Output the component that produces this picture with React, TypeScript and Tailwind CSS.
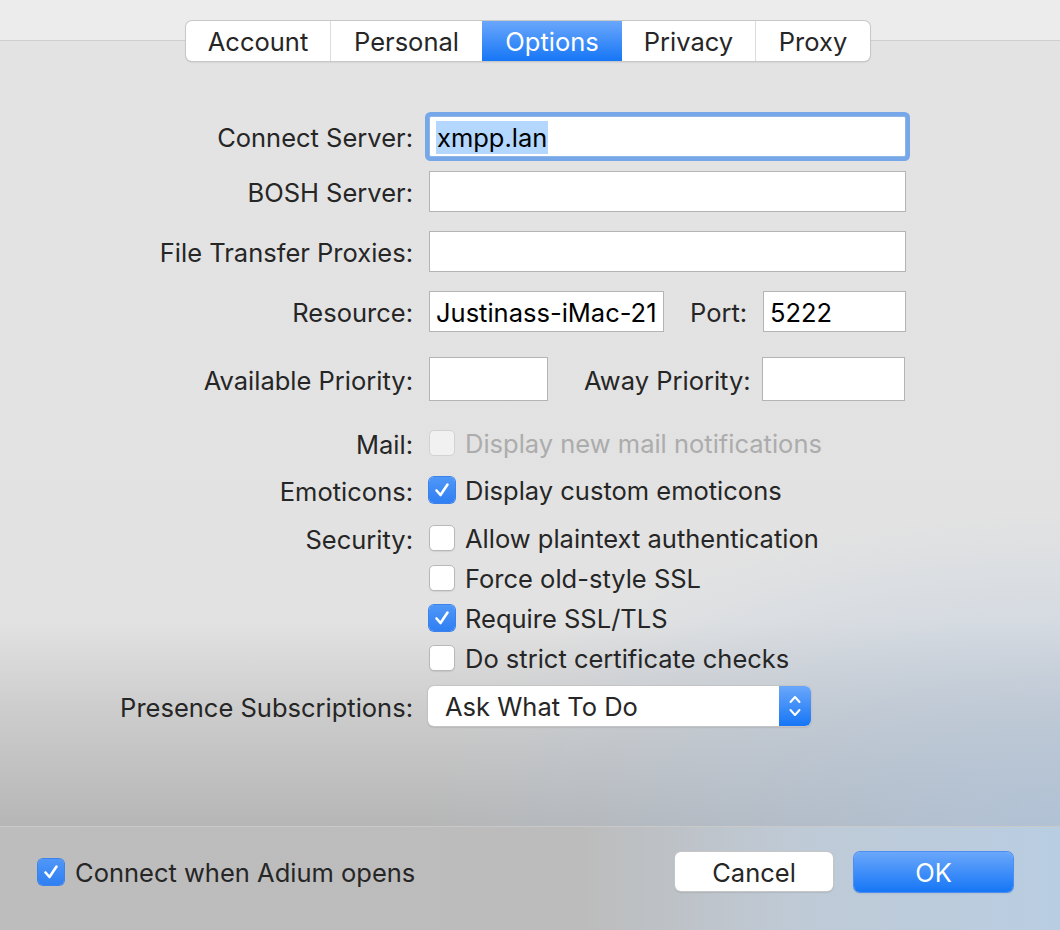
import type { ReactNode } from 'react';

const font = 'font-["Inter","Noto_Sans",sans-serif]';

function Check({ checked, disabled }: { checked?: boolean; disabled?: boolean }) {
  if (checked) {
    return (
      <span className="flex h-[26px] w-[26px] shrink-0 items-center justify-center rounded-[5px] bg-[linear-gradient(180deg,#4f97f8,#2f7ff3)] shadow-[0_0_0_1px_#3a82ec]">
        <svg width="18" height="18" viewBox="0 0 18 18">
          <path d="M3.5 9.5 L7.5 14 L14.5 3.5" fill="none" stroke="#fff" strokeWidth="2.6" strokeLinecap="round" strokeLinejoin="round" />
        </svg>
      </span>
    );
  }
  return (
    <span
      className={`block h-[26px] w-[26px] shrink-0 rounded-[5px] border ${
        disabled ? 'border-[#d2d2d2] bg-[#f1f1f1]' : 'border-[#b8b8b8] bg-white shadow-[0_1px_1px_rgba(0,0,0,0.08)]'
      }`}
    />
  );
}

function Row({ label, children, className = '' }: { label?: string; children: ReactNode; className?: string }) {
  return (
    <div className={`flex items-center ${className}`}>
      <div className="w-[413px] shrink-0 pt-[3px] text-right text-[#262626]">{label}</div>
      <div className="ml-[16px] flex items-center">{children}</div>
    </div>
  );
}

function CheckRow({ label, text, checked, disabled }: { label?: string; text: string; checked?: boolean; disabled?: boolean }) {
  return (
    <Row label={label} className="h-[40px]">
      <Check checked={checked} disabled={disabled} />
      <span className={`ml-[10px] pt-[2px] ${disabled ? 'text-[#acacac]' : 'text-[#262626]'}`}>{text}</span>
    </Row>
  );
}

function Field({ value = '', width, height = 41, focused }: { value?: string; width: number; height?: number; focused?: boolean }) {
  return (
    <div
      className={`flex items-center overflow-hidden border bg-white pl-[6px] pt-[2px] text-black ${
        focused ? 'rounded-[2px] border-[#8fb4e6] shadow-[0_0_0_4px_#76a7e8]' : 'border-[#b4b4b4]'
      }`}
      style={{ width, height }}
    >
      {focused ? <span className="bg-[#b3d7ff] px-[1px] leading-[33px]">{value}</span> : <span className="whitespace-nowrap">{value}</span>}
    </div>
  );
}

const tabs = ['Account', 'Personal', 'Options', 'Privacy', 'Proxy'];
const tabWidths = [144, 152, 140, 133, 115];

export default function App() {
  return (
    <div className={`h-[930px] w-[1060px] overflow-hidden bg-[#e3e3e3] text-[25.5px] leading-[36px] ${font}`}>
      {/* top strip */}
      <div className="h-[41px] border-b border-[#cfcfcf] bg-[#ececec]" />

      {/* body */}
      <div className="flow-root h-[785px] bg-[radial-gradient(ellipse_60%_40%_at_100%_100%,rgba(176,198,224,0.75),rgba(176,198,224,0)),linear-gradient(180deg,#e3e3e3_0%,#e2e2e2_74%,#cdcdcd_85%,#b6b6b6_100%)]">
        {/* tabs */}
        <div className="-mt-[20px] flex justify-center">
          <div className="-ml-[4px] flex h-[40px] overflow-hidden rounded-[6px] bg-white shadow-[0_0_0_1px_#c8c8c8,0_1px_2px_rgba(0,0,0,0.2)]">
            {tabs.map((t, i) => (
              <div
                key={t}
                className={`flex items-center justify-center pt-[2px] ${
                  t === 'Options'
                    ? 'bg-[linear-gradient(180deg,#6aa7fb,#1676f6)] text-white'
                    : 'text-[#262626]'
                } ${i > 0 && t !== 'Options' && tabs[i - 1] !== 'Options' ? 'border-l border-[#dcdcdc]' : ''}`}
                style={{ width: tabWidths[i] }}
              >
                {t}
              </div>
            ))}
          </div>
        </div>

        <Row label="Connect Server:" className="mt-[55px]">
          <Field value="xmpp.lan" width={477} focused />
        </Row>
        <Row label="BOSH Server:" className="mt-[14px]">
          <Field width={477} />
        </Row>
        <Row label="File Transfer Proxies:" className="mt-[19px]">
          <Field width={477} />
        </Row>
        <Row label="Resource:" className="mt-[19px]">
          <Field value="Justinass-iMac-21" width={235} />
          <span className="ml-[26px] w-[57px] pt-[3px] text-[#262626]">Port:</span>
          <span className="ml-[16px]">
            <Field value="5222" width={143} />
          </span>
        </Row>
        <Row label="Available Priority:" className="mt-[25px]">
          <Field width={119} height={44} />
          <span className="ml-[36px] w-[163px] whitespace-nowrap pt-[3px] text-[#262626]">Away Priority:</span>
          <span className="ml-[15px]">
            <Field width={143} height={44} />
          </span>
        </Row>

        <div className="mt-[22px]">
          <CheckRow label="Mail:" text="Display new mail notifications" disabled />
        </div>
        <div className="mt-[7px]">
          <CheckRow label="Emoticons:" text="Display custom emoticons" checked />
        </div>
        <div className="mt-[8px]">
          <CheckRow label="Security:" text="Allow plaintext authentication" />
          <CheckRow text="Force old-style SSL" />
          <CheckRow text="Require SSL/TLS" checked />
          <CheckRow text="Do strict certificate checks" />
        </div>

        <Row label="Presence Subscriptions:" className="mt-[8px]">
          <div className="-ml-[1px] flex h-[40px] w-[383px] overflow-hidden rounded-[6px] bg-white shadow-[0_0_0_1px_#c4c4c4,0_1px_2px_rgba(0,0,0,0.25)]">
            <span className="flex flex-1 items-center pl-[17px] pt-[2px] text-[#262626]">Ask What To Do</span>
            <span className="flex w-[32px] items-center justify-center bg-[linear-gradient(180deg,#6aa7fb,#1676f6)]">
              <svg width="14" height="26" viewBox="0 0 14 26">
                <path d="M2.5 9 L7 4 L11.5 9 M2.5 17 L7 22 L11.5 17" fill="none" stroke="#fff" strokeWidth="2" strokeLinecap="round" strokeLinejoin="round" />
              </svg>
            </span>
          </div>
        </Row>
      </div>

      {/* bottom bar */}
      <div className="flex h-[104px] items-center border-t border-[#c9c9c9] bg-[linear-gradient(90deg,#bdbdbd_0%,#bcbcbc_55%,#bfcad6_75%,#b9cde2_100%)] pb-[14px] pl-[38px] pr-[47px]">
        <Check checked />
        <span className="ml-[11px] pt-[2px] text-[#262626]">Connect when Adium opens</span>
        <div className="ml-auto flex items-center gap-[21px]">
          <button className="h-[39px] w-[158px] rounded-[6px] bg-white pt-[2px] text-[#262626] shadow-[0_0_0_1px_#c6c6c6,0_1px_2px_rgba(0,0,0,0.25)]">
            Cancel
          </button>
          <button className="h-[40px] w-[159px] rounded-[6px] bg-[linear-gradient(180deg,#6aa7fb,#1676f6)] pt-[2px] text-white shadow-[0_0_0_1px_#4d8ff0,0_1px_2px_rgba(0,0,0,0.2)]">
            OK
          </button>
        </div>
      </div>
    </div>
  );
}
